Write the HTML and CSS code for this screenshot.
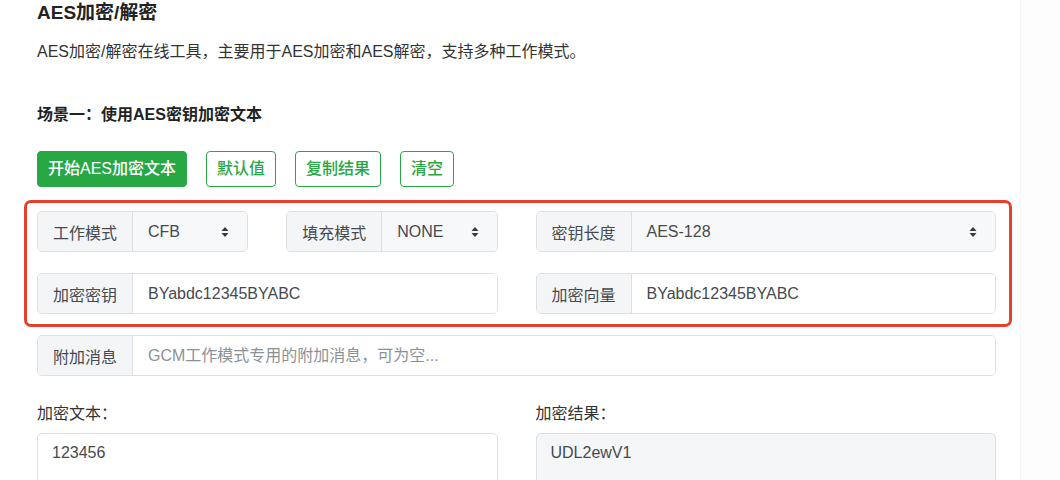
FILE: index.html
```html
<!DOCTYPE html>
<html lang="zh-CN">
<head>
<meta charset="utf-8">
<title>AES加密/解密</title>
<link rel="stylesheet" href="styles.css">
</head>
<body>
<div class="layout">
  <main class="page">
    <h1 class="title">AES加密/解密</h1>
    <p class="desc">AES加密/解密在线工具，主要用于AES加密和AES解密，支持多种工作模式。</p>
    <h2 class="subtitle">场景一：使用AES密钥加密文本</h2>
    <div class="actions">
      <button class="btn btn-solid">开始AES加密文本</button>
      <button class="btn btn-outline">默认值</button>
      <button class="btn btn-outline">复制结果</button>
      <button class="btn btn-outline">清空</button>
    </div>

    <div class="options">
      <div class="pair">
        <div class="group">
          <span class="group-label">工作模式</span>
          <div class="select"><span>CFB</span><svg class="caret" viewBox="0 0 8 10" width="8" height="10"><path d="M4 0 L7.5 4 H0.5 Z M4 10 L7.5 6 H0.5 Z" fill="#343a40"/></svg></div>
        </div>
        <div class="group">
          <span class="group-label">填充模式</span>
          <div class="select"><span>NONE</span><svg class="caret" viewBox="0 0 8 10" width="8" height="10"><path d="M4 0 L7.5 4 H0.5 Z M4 10 L7.5 6 H0.5 Z" fill="#343a40"/></svg></div>
        </div>
      </div>
      <div class="group">
        <span class="group-label">密钥长度</span>
        <div class="select"><span>AES-128</span><svg class="caret" viewBox="0 0 8 10" width="8" height="10"><path d="M4 0 L7.5 4 H0.5 Z M4 10 L7.5 6 H0.5 Z" fill="#343a40"/></svg></div>
      </div>
      <div class="group">
        <span class="group-label">加密密钥</span>
        <input class="control" type="text" value="BYabdc12345BYABC">
      </div>
      <div class="group">
        <span class="group-label">加密向量</span>
        <input class="control" type="text" value="BYabdc12345BYABC">
      </div>
      <div class="group span-all">
        <span class="group-label">附加消息</span>
        <input class="control" type="text" placeholder="GCM工作模式专用的附加消息，可为空...">
      </div>
    </div>

    <div class="io">
      <div class="field">
        <label class="field-label">加密文本：</label>
        <textarea class="area">123456</textarea>
      </div>
      <div class="field">
        <label class="field-label">加密结果：</label>
        <textarea class="area area-readonly" readonly>UDL2ewV1</textarea>
      </div>
    </div>

    <div class="highlight"></div>
  </main>
  <aside class="side"></aside>
</div>
</body>
</html>
```

FILE: styles.css
```css
* { box-sizing: border-box; }

html, body {
  margin: 0;
  padding: 0;
  background: #ffffff;
  overflow: hidden;
}

body {
  font-family: "Liberation Sans", "Noto Sans CJK SC", sans-serif;
  font-size: 16px;
  color: #333;
}

.layout {
  display: flex;
  height: 480px;
  overflow: hidden;
}

.page {
  position: relative;
  width: 1020px;
  flex: none;
  padding: 0 24px 0 37px;
  overflow: hidden;
}

.side {
  flex: 1;
  background: #fdfdfd;
  border-left: 1px solid #f6f6f6;
}

.title {
  margin: 0;
  font-size: 19px;
  line-height: 25px;
  font-weight: 700;
  color: #222;
}

.desc {
  margin: 15px 0 0;
  line-height: 24px;
  color: #333;
}

.subtitle {
  margin: 39px 0 0;
  font-size: 16px;
  line-height: 24px;
  font-weight: 700;
  color: #222;
}

.actions {
  display: flex;
  gap: 19px;
  margin-top: 24px;
}

.btn {
  height: 36px;
  padding: 0 10px;
  border: 1px solid #28a745;
  border-radius: 4px;
  font-family: inherit;
  font-size: 16px;
  font-weight: 500;
  line-height: 34px;
  cursor: pointer;
}

.btn-solid {
  background: #28a745;
  color: #fff;
}

.btn-outline {
  background: #fff;
  color: #28a745;
}

.options {
  display: grid;
  grid-template-columns: 1fr 1fr;
  column-gap: 38px;
  row-gap: 21px;
  margin-top: 24px;
}

.pair {
  display: grid;
  grid-template-columns: 1fr 1fr;
  column-gap: 38px;
}

.span-all {
  grid-column: 1 / -1;
}

.group {
  display: flex;
  height: 41px;
  border: 1px solid #dcdfe3;
  border-radius: 5px;
  overflow: hidden;
}

.group-label {
  flex: none;
  display: flex;
  align-items: center;
  padding: 0 15px;
  background: #f4f5f7;
  border-right: 1px solid #dcdfe3;
  color: #454a50;
}

.select {
  flex: 1;
  display: flex;
  align-items: center;
  justify-content: space-between;
  padding: 0 18px 0 15px;
  background: #f7f8fa;
  color: #454a50;
}

.caret {
  display: block;
  flex: none;
}

.control {
  flex: 1;
  min-width: 0;
  border: 0;
  outline: none;
  padding: 0 15px;
  font-family: inherit;
  font-size: 16px;
  color: #454a50;
  background: #fff;
}

.control::placeholder {
  color: #8c9196;
}

.io {
  display: grid;
  grid-template-columns: 1fr 1fr;
  column-gap: 38px;
  margin-top: 26px;
}

.field {
  display: flex;
  flex-direction: column;
}

.field-label {
  line-height: 24px;
  color: #333;
}

.area {
  margin-top: 7px;
  height: 100px;
  padding: 7px 14px;
  border: 1px solid #dcdfe3;
  border-radius: 5px;
  font-family: inherit;
  font-size: 16px;
  line-height: 24px;
  color: #454a50;
  background: #fff;
  resize: none;
  outline: none;
}

.area-readonly {
  background: #f5f6f8;
}

.highlight {
  position: absolute;
  left: 24px;
  top: 200px;
  width: 988px;
  height: 127px;
  border: 3px solid #e5402e;
  border-radius: 7px;
  pointer-events: none;
}
```
